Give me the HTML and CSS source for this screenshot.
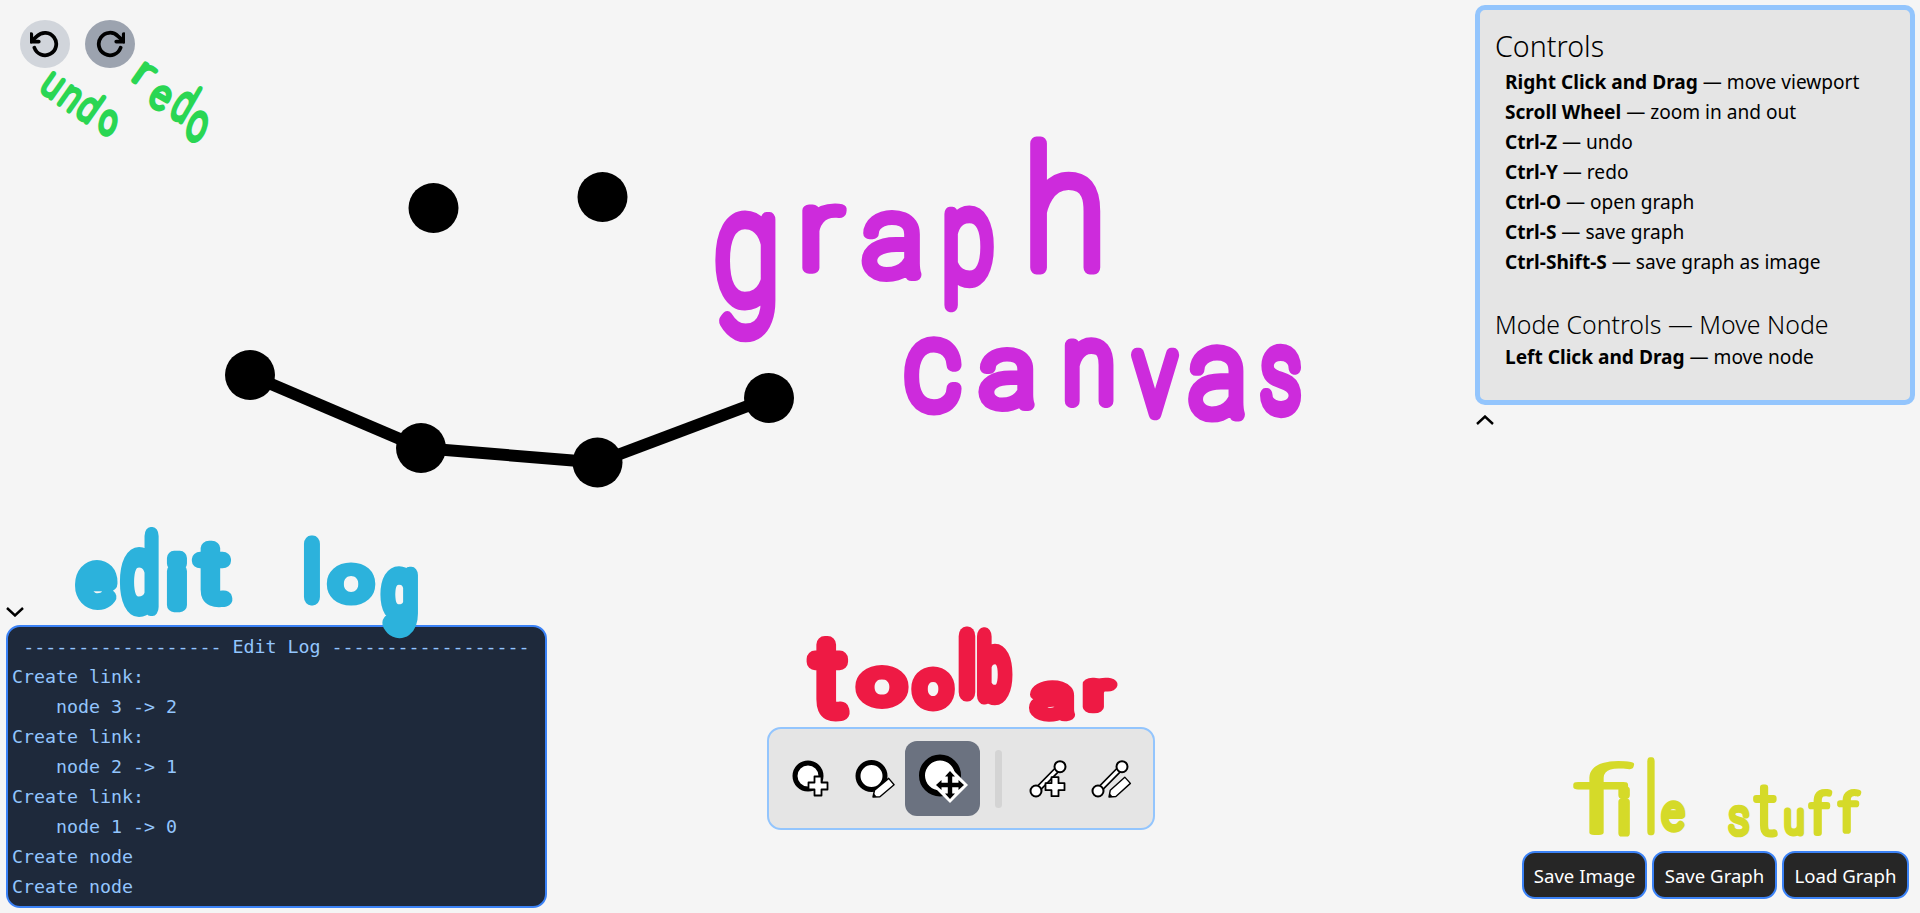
FILE: index.html
```html
<!DOCTYPE html>
<html lang="en">
<head>
<meta charset="utf-8">
<title>Graph Editor</title>
<link rel="stylesheet" href="styles.css">
</head>
<body>
<div class="app">
  <svg class="layer" viewBox="0 0 1920 913" aria-label="graph canvas">
    <g class="links">
      <line x1="250" y1="375" x2="421" y2="448"/>
      <line x1="421" y1="448" x2="597.5" y2="462.5"/>
      <line x1="597.5" y1="462.5" x2="769" y2="398"/>
    </g>
    <g class="nodes">
      <circle cx="433.5" cy="208" r="25"/>
      <circle cx="602.5" cy="197" r="25"/>
      <circle cx="250" cy="375" r="25"/>
      <circle cx="421" cy="448" r="25"/>
      <circle cx="597.5" cy="462.5" r="25"/>
      <circle cx="769" cy="398" r="25"/>
    </g>
  </svg>

  <div class="ui">
    <div class="top-row">
      <div class="history">
        <button class="round round-undo" aria-label="undo">
          <svg class="feather" viewBox="0 0 24 24"><polyline points="1 4 1 10 7 10"/><path d="M3.51 15a9 9 0 1 0 2.13-9.36L1 10"/></svg>
        </button>
        <button class="round round-redo" aria-label="redo">
          <svg class="feather" viewBox="0 0 24 24"><polyline points="23 4 23 10 17 10"/><path d="M20.49 15a9 9 0 1 1-2.12-9.36L23 10"/></svg>
        </button>
      </div>
      <div class="controls-wrap">
        <section class="controls">
          <h2>Controls</h2>
          <ul>
            <li><b>Right Click and Drag</b> — move viewport</li>
            <li><b>Scroll Wheel</b> — zoom in and out</li>
            <li><b>Ctrl-Z</b> — undo</li>
            <li><b>Ctrl-Y</b> — redo</li>
            <li><b>Ctrl-O</b> — open graph</li>
            <li><b>Ctrl-S</b> — save graph</li>
            <li><b>Ctrl-Shift-S</b> — save graph as image</li>
          </ul>
          <h2 class="mode-title">Mode Controls — Move Node</h2>
          <ul>
            <li><b>Left Click and Drag</b> — move node</li>
          </ul>
        </section>
        <svg class="chevron chevron-up" viewBox="0 0 18 10"><polyline points="1 9 9 1.5 17 9"/></svg>
      </div>
    </div>

    <div class="bottom-row">
      <div class="log-wrap">
        <svg class="chevron chevron-down" viewBox="0 0 18 10"><polyline points="1 1 9 8.5 17 1"/></svg>
        <section class="log">
          <div class="log-head">------------------ Edit Log ------------------</div>
          <div>Create link:</div>
          <div class="indent">node 3 -&gt; 2</div>
          <div>Create link:</div>
          <div class="indent">node 2 -&gt; 1</div>
          <div>Create link:</div>
          <div class="indent">node 1 -&gt; 0</div>
          <div>Create node</div>
          <div>Create node</div>
        </section>
      </div>

      <nav class="toolbar">
        <button class="tool" aria-label="add node">
          <svg viewBox="0 0 50 50">
            <circle class="ring" cx="25" cy="22" r="13"/>
            <path class="glyph" transform="translate(35 32)" d="M-3.5 -9.5H3.5V-3.5H9.5V3.5H3.5V9.5H-3.5V3.5H-9.5V-3.5H-3.5Z"/>
          </svg>
        </button>
        <button class="tool" aria-label="edit node">
          <svg viewBox="0 0 50 50">
            <circle class="ring" cx="26.5" cy="22" r="13.5"/>
            <g transform="translate(28 43) rotate(-40)">
              <path class="glyph glyph-thin" d="M0 0L5.5 -4.2H24V4.2H5.5Z"/>
              <path class="tip" d="M0 0L3 -2.2V2.2Z"/>
            </g>
          </svg>
        </button>
        <button class="tool tool-active" aria-label="move node">
          <svg viewBox="0 0 75 75">
            <circle class="ring ring-big" cx="35" cy="34.5" r="18"/>
            <path class="diamond" d="M45 26L63 44L45 62L27 44Z"/>
            <path class="tip" transform="translate(45 44)" d="M0 -14L5 -8.5H2.2V-2.2H8.5V-5L14 0L8.5 5V2.2H2.2V8.5H5L0 14L-5 8.5H-2.2V2.2H-8.5V5L-14 0L-8.5 -5V-2.2H-2.2V-8.5H-5Z"/>
          </svg>
        </button>
        <span class="divider"></span>
        <button class="tool" aria-label="add link">
          <svg viewBox="0 0 50 50">
            <line class="bar-out" x1="37" y1="12.7" x2="13" y2="37"/>
            <line class="bar-in" x1="37" y1="12.7" x2="13" y2="37"/>
            <circle class="end" cx="37" cy="12.7" r="5.5"/>
            <circle class="end" cx="13" cy="37" r="5.5"/>
            <path class="glyph" transform="translate(32 32.7)" d="M-3.5 -9.5H3.5V-3.5H9.5V3.5H3.5V9.5H-3.5V3.5H-9.5V-3.5H-3.5Z"/>
          </svg>
        </button>
        <button class="tool" aria-label="edit link">
          <svg viewBox="0 0 50 50">
            <line class="bar-out" x1="37" y1="12.7" x2="13" y2="37"/>
            <line class="bar-in" x1="37" y1="12.7" x2="13" y2="37"/>
            <circle class="end" cx="37" cy="12.7" r="5.5"/>
            <circle class="end" cx="13" cy="37" r="5.5"/>
            <g transform="translate(24 43) rotate(-42)">
              <path class="glyph glyph-thin" d="M0 0L5.5 -4.2H25V4.2H5.5Z"/>
              <path class="tip" d="M0 0L3 -2.2V2.2Z"/>
            </g>
          </svg>
        </button>
      </nav>

      <div class="file-actions">
        <button class="file-btn">Save Image</button>
        <button class="file-btn">Save Graph</button>
        <button class="file-btn">Load Graph</button>
      </div>
    </div>
  </div>

  <svg class="layer ink-layer" viewBox="0 0 1920 913" aria-label="handwritten notes">
    <g class="ink ink-magenta">
      <text stroke-width="9.5" transform="translate(747 302) scale(1.2 1.55)">g</text>
      <text stroke-width="10.5" transform="translate(820 267.5) scale(1.3 1.1)">r</text>
      <text stroke-width="11" transform="translate(893 274.5) scale(1.15 1.1)">a</text>
      <text stroke-width="11.5" transform="translate(968 279.5) scale(.95 1.25)">p</text>
      <text stroke-width="8.5" transform="translate(1065 267.5) scale(1.5 1.65)">h</text>
      <text stroke-width="11" transform="translate(933 407.5) scale(1.1 1.2)">c</text>
      <text stroke-width="12.5" transform="translate(1008 404.5) scale(1.05 .96)">a</text>
      <text stroke-width="13" transform="translate(1089 400.5) scale(.95 1.06)">n</text>
      <text stroke-width="13" transform="translate(1155 412.5) scale(.85 1.1)">v</text>
      <text stroke-width="11" transform="translate(1218 414.5) scale(1.09 1.19)">a</text>
      <text stroke-width="13" transform="translate(1281 409.5) scale(.8 1.1)">s</text>
    </g>
    <g class="ink ink-blue">
      <text stroke-width="23" transform="translate(96 602) scale(.65 .65)">e</text>
      <text stroke-width="19" transform="translate(140 607) scale(.65 .95)">d</text>
      <text class="square-dot" stroke-width="22" transform="translate(177 605) scale(.65 .65)">i</text>
      <text stroke-width="19" transform="translate(213 599) scale(.9 .76)">t</text>
      <text stroke-width="24" transform="translate(312 597) scale(.6 .7)">l</text>
      <text stroke-width="21" transform="translate(351 599) scale(.72 .58)">o</text>
      <text stroke-width="22" transform="translate(400 614) scale(.6 .75)">g</text>
    </g>
    <g class="ink ink-red">
      <text stroke-width="17" transform="translate(829 711.5)">t</text>
      <text stroke-width="22" transform="translate(882 701.5) scale(.78 .58)">o</text>
      <text stroke-width="24" transform="translate(933 703.5) scale(.62 .58)">o</text>
      <text stroke-width="25" transform="translate(967 691.5) scale(.6 .75)">l</text>
      <text stroke-width="24" transform="translate(994 694.5) scale(.55 .77)">b</text>
      <text stroke-width="23" transform="translate(1053 714.5) scale(.72 .54)">a</text>
      <text stroke-width="30" transform="translate(1098 706.5) scale(.65 .42)">r</text>
    </g>
    <g class="ink ink-yellow">
      <text stroke-width="5.5" transform="translate(1600 833) scale(1.75 .9)">f</text>
      <text class="square-dot" stroke-width="12" transform="translate(1624 833) scale(.55 .6)">i</text>
      <text stroke-width="9.5" transform="translate(1651 831) scale(.6 .92)">l</text>
      <text stroke-width="16" transform="translate(1673 829) scale(.42 .46)">e</text>
      <text stroke-width="14" transform="translate(1739 834) scale(.41 .48)">s</text>
      <text stroke-width="9" transform="translate(1766 834) scale(.7 .69)">t</text>
      <text stroke-width="17" transform="translate(1794 833) scale(.36 .4)">u</text>
      <text stroke-width="11" transform="translate(1819 833) scale(.6 .53)">f</text>
      <text stroke-width="11" transform="translate(1848 831) scale(.6 .51)">f</text>
    </g>
    <g class="ink ink-green">
      <text stroke-width="13" y="26" transform="translate(52 86) rotate(35) scale(.33 .4)">u</text>
      <text stroke-width="13" y="26" transform="translate(70 99) rotate(35) scale(.33 .4)">n</text>
      <text stroke-width="13" y="36" transform="translate(90 107) rotate(35) scale(.33 .4)">d</text>
      <text stroke-width="15" y="26" transform="translate(108 123) rotate(15) scale(.3 .4)">o</text>
      <text stroke-width="11" y="26" transform="translate(143 75) rotate(35) scale(.5 .4)">r</text>
      <text stroke-width="13" y="26" transform="translate(160 98) rotate(30) scale(.36 .4)">e</text>
      <text stroke-width="12" y="36" transform="translate(185 103) rotate(30) scale(.33 .5)">d</text>
      <text stroke-width="13" y="26" transform="translate(197 127) rotate(20) scale(.33 .5)">o</text>
    </g>
  </svg>
</div>
</body>
</html>
```

FILE: styles.css
```css
* { box-sizing: border-box; }

html, body {
  margin: 0;
  height: 100%;
}

body {
  background: #f5f5f5;
  color: #000;
  font-family: "Noto Sans", "Open Sans", sans-serif;
  overflow: hidden;
}

button {
  font: inherit;
  padding: 0;
  border: 0;
  cursor: pointer;
}

.app {
  position: relative;
  width: 100%;
  height: 913px;
  overflow: hidden;
}

.layer {
  position: absolute;
  inset: 0;
  width: 1920px;
  height: 913px;
}

.ink-layer { pointer-events: none; }

.links line { stroke: #000; stroke-width: 12; }
.nodes circle { fill: #000; }

.ui {
  position: absolute;
  inset: 0;
  display: flex;
  flex-direction: column;
  justify-content: space-between;
}

.top-row {
  display: flex;
  justify-content: space-between;
  align-items: flex-start;
  padding: 5px 5px 0 20px;
}

.history {
  display: flex;
  gap: 15px;
  margin-top: 15px;
}

.round {
  width: 50px;
  height: 48px;
  border-radius: 50%;
  display: flex;
  align-items: center;
  justify-content: center;
}

.round-undo { background: #d1d5db; }
.round-redo { background: #9ca3af; }

.feather {
  width: 30px;
  height: 30px;
  fill: none;
  stroke: #000;
  stroke-width: 3;
  stroke-linecap: round;
  stroke-linejoin: round;
}

.controls-wrap {
  display: flex;
  flex-direction: column;
  align-items: flex-start;
}

.controls {
  width: 440px;
  height: 400px;
  padding: 14px 15px;
  background: #e5e5e5;
  border: 5px solid #93c5fd;
  border-radius: 10px;
}

.controls h2 {
  margin: 0;
  font-size: 28.6px;
  font-weight: 300;
  line-height: 43px;
}

.controls .mode-title {
  margin-top: 29px;
  font-size: 24.9px;
  line-height: 36px;
}

.controls ul {
  list-style: none;
  margin: 0;
  padding: 0 0 0 10px;
}

.controls li {
  font-size: 19.1px;
  line-height: 30px;
  white-space: nowrap;
}

.controls b { font-weight: 700; }

.chevron {
  width: 18px;
  height: 10px;
  fill: none;
  stroke: #000;
  stroke-width: 2.4;
}

.chevron-up { margin: 10px 0 0 1px; }
.chevron-down { margin: 0 0 8px 1px; }

.bottom-row {
  display: grid;
  grid-template-columns: 1fr auto 1fr;
  align-items: end;
  padding: 0 5px 5px;
}

.log-wrap {
  display: flex;
  flex-direction: column;
  align-items: flex-start;
}

.log {
  width: 541px;
  height: 283px;
  margin-left: 1px;
  padding: 5px 4px;
  overflow: hidden;
  background: #1e293b;
  border: 2px solid #3b82f6;
  border-radius: 14px;
  color: #93c5fd;
  font-family: "DejaVu Sans Mono", "Liberation Mono", monospace;
  font-size: 18.3px;
  line-height: 30px;
  white-space: nowrap;
}

.log-head { text-align: center; }
.indent { padding-left: 44px; }

.toolbar {
  display: flex;
  align-items: center;
  width: 388px;
  height: 103px;
  margin: 0 0 78px 2px;
  padding: 0 0 0 8px;
  background: #e5e5e5;
  border: 2px solid #93c5fd;
  border-radius: 14px;
}

.tool {
  width: 50px;
  height: 50px;
  margin: 0 6px;
  background: transparent;
  flex: none;
}

.tool svg {
  display: block;
  width: 100%;
  height: 100%;
  overflow: visible;
}

.tool-active {
  width: 75px;
  height: 75px;
  margin: 0 6px 0 4px;
  background: #6b7280;
  border-radius: 12px;
}

.divider {
  width: 7px;
  height: 58px;
  margin: 0 15px 0 9px;
  background: #d4d4d4;
  border-radius: 4px;
  flex: none;
}

.ring { fill: #fff; stroke: #000; stroke-width: 5; }
.ring-big { stroke-width: 6; }
.glyph { fill: #fff; stroke: #000; stroke-width: 1.8; stroke-linejoin: round; }
.glyph-thin { stroke-width: 1.4; }
.tip { fill: #000; }
.diamond { fill: #fff; }
.bar-out { stroke: #000; stroke-width: 6.5; stroke-linecap: round; }
.bar-in { stroke: #fff; stroke-width: 3.2; stroke-linecap: round; }
.end { fill: #fff; stroke: #000; stroke-width: 2; }

.file-actions {
  justify-self: end;
  display: flex;
  gap: 5px;
  margin: 0 6px 9px 0;
}

.file-btn {
  width: 125px;
  height: 48px;
  background: #262626;
  border: 2px solid #3b82f6;
  border-radius: 13px;
  color: #fff;
  font-size: 18.6px;
  white-space: nowrap;
}

.file-btn:last-child { width: 127px; }

.ink text {
  font-family: "Roboto", sans-serif;
  font-weight: 100;
  font-size: 100px;
  text-anchor: middle;
  stroke-linejoin: round;
  stroke-linecap: round;
}

.ink .square-dot {
  font-family: "Liberation Sans", sans-serif;
  font-weight: 400;
}

.ink-magenta text { fill: #cd2bdc; stroke: #cd2bdc; }
.ink-blue text { fill: #2cb2dc; stroke: #2cb2dc; }
.ink-red text { fill: #ee1a44; stroke: #ee1a44; }
.ink-yellow text { fill: #d5da29; stroke: #d5da29; }
.ink-green text { fill: #2ad653; stroke: #2ad653; }
```
